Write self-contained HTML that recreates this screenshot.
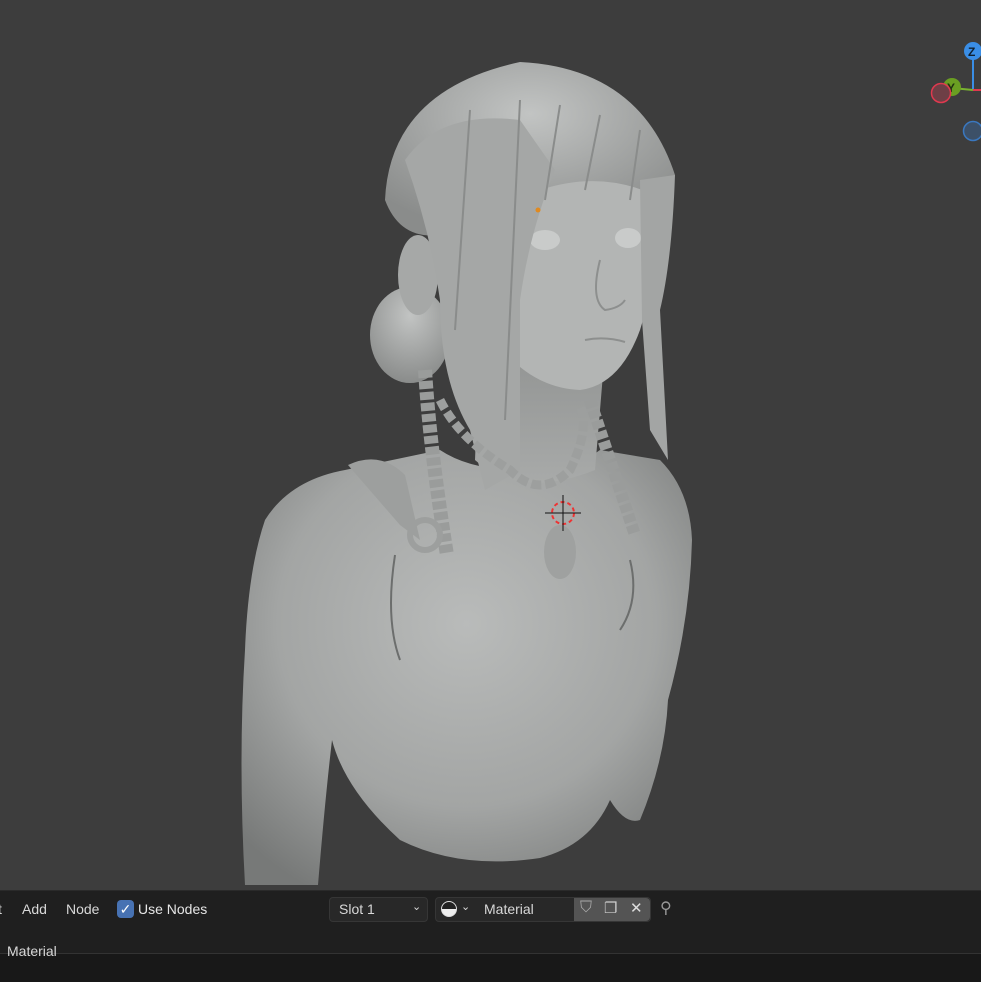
<!DOCTYPE html>
<html><head><meta charset="utf-8"><style>
body{margin:0;width:981px;height:981px;overflow:hidden;background:#3d3d3d;font-family:"Liberation Sans",sans-serif;position:relative}
.bar{position:absolute;left:0;top:890px;width:981px;height:63px;background:#1f1f1f;border-top:1px solid #2a2a2a}
.bot{position:absolute;left:0;top:953px;width:981px;height:28px;background:#181818;border-top:1px solid #333}
.t{position:absolute;color:#d8d8d8;font-size:14px}
.box{position:absolute;border-radius:4px;box-sizing:border-box}
</style></head><body>
<svg width="981" height="890" style="position:absolute;left:0;top:0">
<defs>
<radialGradient id="sk" cx="50%" cy="40%" r="70%"><stop offset="0" stop-color="#b9bbba"/><stop offset="0.6" stop-color="#a3a5a4"/><stop offset="1" stop-color="#777978"/></radialGradient>
<radialGradient id="hr" cx="50%" cy="30%" r="70%"><stop offset="0" stop-color="#c2c4c3"/><stop offset="1" stop-color="#8a8c8b"/></radialGradient>
<linearGradient id="nk" x1="0" y1="0" x2="0" y2="1"><stop offset="0" stop-color="#8f9190"/><stop offset="1" stop-color="#a8aaa9"/></linearGradient>
</defs>
<!-- body -->
<path d="M345 470 Q290 480 265 520 Q248 570 245 650 Q238 760 245 885 L318 885 Q325 800 332 740 Q345 790 400 840 Q460 870 540 858 Q590 845 610 800 Q625 825 640 820 Q665 760 668 700 Q690 620 692 540 Q690 490 660 460 L600 450 Q560 480 520 470 Q470 470 440 450 Z" fill="url(#sk)"/>
<!-- neck -->
<path d="M480 330 L475 460 Q520 500 595 470 L605 350 Z" fill="url(#nk)"/>
<!-- bun + ear -->
<ellipse cx="410" cy="335" rx="40" ry="48" fill="url(#hr)"/>
<ellipse cx="418" cy="275" rx="20" ry="40" fill="#a6a8a7"/>
<!-- face -->
<path d="M470 170 Q560 150 655 185 Q662 260 640 330 Q620 385 580 390 Q530 388 495 340 Q470 280 470 170 Z" fill="#b3b5b4"/>
<ellipse cx="545" cy="240" rx="15" ry="10" fill="#c9cbca"/>
<ellipse cx="628" cy="238" rx="13" ry="10" fill="#c9cbca"/>
<path d="M600 260 Q590 300 605 310 Q620 308 625 300" stroke="#8d8f8e" stroke-width="2" fill="none"/>
<path d="M585 340 Q605 336 625 342" stroke="#8d8f8e" stroke-width="2" fill="none"/>
<!-- hair cap -->
<path d="M385 200 Q390 90 520 62 Q640 68 675 175 L655 195 Q600 170 540 190 Q500 150 470 180 L440 235 Q400 240 385 200 Z" fill="url(#hr)"/>
<!-- left hair chunk -->
<path d="M405 160 Q440 110 520 120 L555 170 Q530 230 520 300 L520 470 L485 490 L470 430 Q440 380 440 300 Q430 230 405 160 Z" fill="#a5a7a6"/>
<!-- right strand -->
<path d="M640 180 L675 175 Q672 260 660 310 L668 460 L650 430 L642 320 Z" fill="#a3a5a4"/>
<path d="M470 110 L455 330 M520 100 L505 420 M560 105 L545 200 M600 115 L585 190 M640 130 L630 200" stroke="#8a8c8b" stroke-width="2" fill="none"/>
<!-- braids -->
<path d="M425 370 Q430 450 447 555" stroke="#9a9c9b" stroke-width="14" stroke-dasharray="8 3" fill="none"/>
<path d="M590 400 Q610 460 635 535" stroke="#9a9c9b" stroke-width="12" stroke-dasharray="8 3" fill="none"/>
<path d="M348 465 Q380 450 405 475 L420 540 L400 525 Z" fill="#9d9f9e"/>
<circle cx="425" cy="535" r="15" fill="none" stroke="#9d9f9e" stroke-width="6"/>
<!-- necklace -->
<path d="M440 400 Q460 440 510 470 Q540 500 570 470 Q590 430 580 405" stroke="#9d9f9e" stroke-width="9" stroke-dasharray="10 4" fill="none"/>
<ellipse cx="560" cy="552" rx="16" ry="27" fill="#9fa1a0"/>
<!-- top line -->
<path d="M395 555 Q385 620 400 660 M630 560 Q640 600 620 630" stroke="#6c6e6d" stroke-width="2" fill="none"/>
<circle cx="538" cy="210" r="2.5" fill="#e08a20"/>
<circle cx="563" cy="513" r="11" fill="none" stroke="#e33" stroke-width="2" stroke-dasharray="4 3"/>
<path d="M545 513 H581 M563 495 V531" stroke="#111" stroke-width="1"/>
<!-- gizmo -->
<line x1="973" y1="52" x2="973" y2="90" stroke="#3a8ee6" stroke-width="2"/>
<line x1="952" y1="88" x2="973" y2="90" stroke="#7ab330" stroke-width="2"/>
<line x1="973" y1="90" x2="981" y2="90" stroke="#e0394f" stroke-width="2"/>
<circle cx="973" cy="51" r="9" fill="#3a8ee6"/><text x="968" y="56" font-size="12" font-weight="bold" fill="#102030" font-family="Liberation Sans">Z</text>
<circle cx="952" cy="87" r="9" fill="#6a9e22"/><text x="947" y="92" font-size="12" font-weight="bold" fill="#203010" font-family="Liberation Sans">Y</text>
<circle cx="941" cy="93" r="9.5" fill="#6e3f46" stroke="#e0394f" stroke-width="1.5"/>
<circle cx="973" cy="131" r="9.5" fill="#3c5068" stroke="#3a78c0" stroke-width="1.5"/>
</svg>
<div class="bar"></div><div class="bot"></div>
<div class="t" style="left:-2px;top:901px">t</div>
<div class="t" style="left:22px;top:901px">Add</div>
<div class="t" style="left:66px;top:901px">Node</div>
<div class="box" style="left:117px;top:900px;width:17px;height:18px;background:#4772b3;color:#fff;font-size:14px;text-align:center;line-height:18px">✓</div>
<div class="t" style="left:138px;top:901px;color:#e6e6e6">Use Nodes</div>
<div class="box" style="left:329px;top:897px;width:99px;height:25px;background:#282828;border:1px solid #363636"></div>
<div class="t" style="left:339px;top:901px">Slot 1</div>
<div class="t" style="left:412px;top:900px;font-size:11px">⌄</div>
<div class="box" style="left:435px;top:897px;width:216px;height:25px;background:#282828;border:1px solid #363636"></div>
<div class="box" style="left:574px;top:898px;width:76px;height:23px;background:#545454;border-radius:0 4px 4px 0"></div>
<div style="position:absolute;left:441px;top:901px;width:16px;height:16px;border-radius:50%;background:conic-gradient(#222 0 25%,#eee 25% 75%,#222 75%);border:1px solid #ddd;box-sizing:border-box"></div>
<div class="t" style="left:461px;top:900px;font-size:11px">⌄</div>
<div class="t" style="left:484px;top:901px">Material</div>
<div class="t" style="left:580px;top:899px;color:#aaa;font-size:16px">⛉</div>
<div class="t" style="left:604px;top:899px;color:#ccc;font-size:15px">❐</div>
<div class="t" style="left:630px;top:899px;color:#ddd;font-size:15px">✕</div>
<div class="t" style="left:660px;top:898px;color:#999;font-size:16px">⚲</div>
<div class="t" style="left:7px;top:943px">Material</div>
</body></html>
